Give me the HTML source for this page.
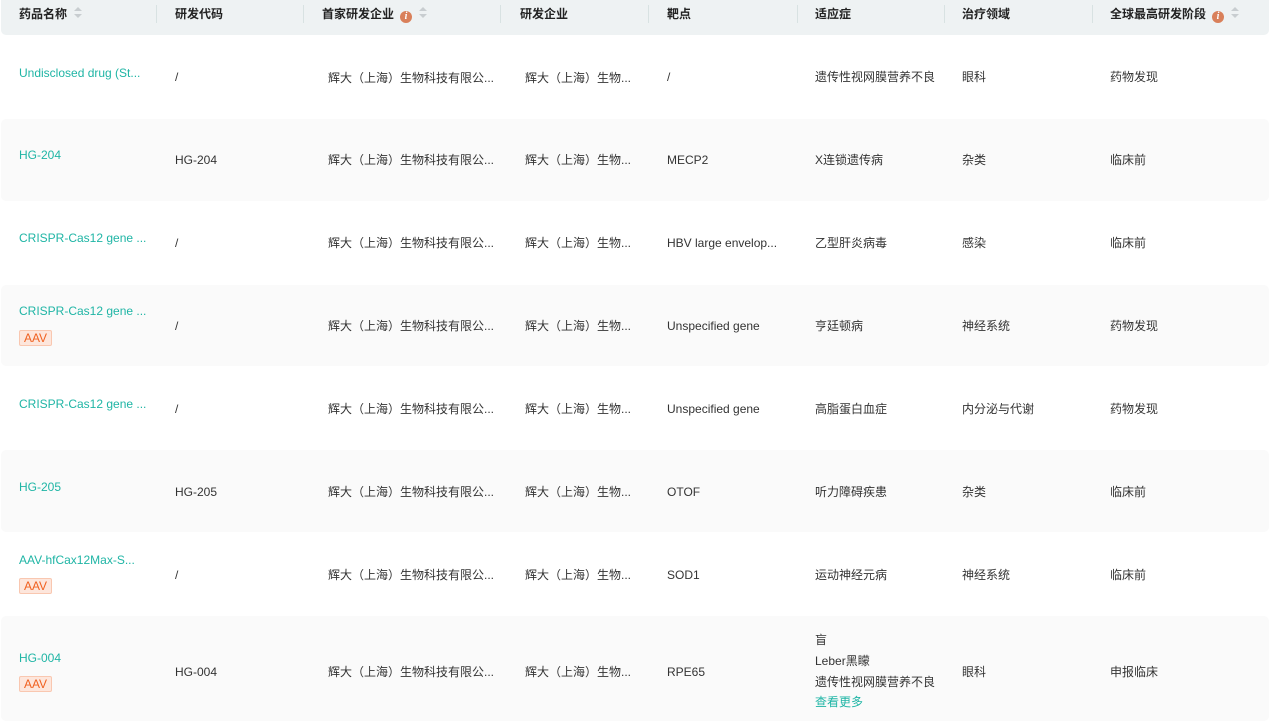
<!DOCTYPE html>
<html><head><meta charset="utf-8"><style>
*{margin:0;padding:0;box-sizing:border-box}
body{width:1269px;height:721px;overflow:hidden;background:#fff;font-family:"Liberation Sans","Noto Sans CJK SC",sans-serif;font-size:12px;color:#333;position:relative}
.hd{position:absolute;left:1px;top:0;width:1268px;height:35px;background:#eef2f3;border-radius:0 0 5px 5px}
.h{position:absolute;top:0;height:35px;line-height:29px;font-weight:bold;color:#222;font-size:12px}
.sep{position:absolute;top:5px;width:1px;height:18px;background:#d8e2e2}
.info{display:inline-block;width:12px;height:12px;border-radius:50%;background:#d9805a;color:#fff;font-size:10px;line-height:12px;text-align:center;font-style:italic;font-weight:bold;font-family:"Liberation Serif",serif;vertical-align:-1px;margin-left:6px}
.sort{display:inline-block;width:8px;height:12px;position:relative;vertical-align:-1px;margin-left:7px}
.sort:before{content:"";position:absolute;left:0;top:0;border:4px solid transparent;border-bottom:4px solid #c8cdd0;border-top:0}
.sort:after{content:"";position:absolute;left:0;top:7px;border:4px solid transparent;border-top:4px solid #c8cdd0;border-bottom:0}
.row{position:absolute;left:1px;width:1268px;border-radius:5px}
.g{background:#fafafa}
.c{position:absolute;white-space:nowrap}
.lk{color:#1fb5a5}
.tag{position:absolute;left:19px;width:33px;height:16px;background:#fde6dc;border:1px solid #f9c7b0;color:#f0601f;font-size:12px;line-height:14px;text-align:center;border-radius:2px}
</style></head><body>
<div class="hd"></div>
<div class="h" style="left:19px">药品名称<span class="sort"></span></div>
<div class="sep" style="left:156px"></div>
<div class="h" style="left:175px">研发代码</div>
<div class="sep" style="left:303px"></div>
<div class="h" style="left:322px">首家研发企业<span class="info">i</span><span class="sort"></span></div>
<div class="sep" style="left:500px"></div>
<div class="h" style="left:520px">研发企业</div>
<div class="sep" style="left:648px"></div>
<div class="h" style="left:667px">靶点</div>
<div class="sep" style="left:797px"></div>
<div class="h" style="left:815px">适应症</div>
<div class="sep" style="left:944px"></div>
<div class="h" style="left:962px">治疗领域</div>
<div class="sep" style="left:1092px"></div>
<div class="h" style="left:1110px">全球最高研发阶段<span class="info">i</span><span class="sort"></span></div>

<div class="row g" style="top:119px;height:82px"></div>
<div class="row g" style="top:285px;height:81px"></div>
<div class="row g" style="top:450px;height:82px"></div>
<div class="row g" style="top:616px;height:105px"></div>

<div class="c lk" style="left:19px;top:66px">Undisclosed drug (St...</div>
<div class="c" style="left:175px;top:70px">/</div>
<div class="c" style="left:328px;top:69px">辉大（上海）生物科技有限公...</div>
<div class="c" style="left:525px;top:69px">辉大（上海）生物...</div>
<div class="c" style="left:667px;top:70px">/</div>
<div class="c" style="left:815px;top:68px">遗传性视网膜营养不良</div>
<div class="c" style="left:962px;top:68px">眼科</div>
<div class="c" style="left:1110px;top:68px">药物发现</div>

<div class="c lk" style="left:19px;top:148px">HG-204</div>
<div class="c" style="left:175px;top:153px">HG-204</div>
<div class="c" style="left:328px;top:151px">辉大（上海）生物科技有限公...</div>
<div class="c" style="left:525px;top:151px">辉大（上海）生物...</div>
<div class="c" style="left:667px;top:153px">MECP2</div>
<div class="c" style="left:815px;top:151px">X连锁遗传病</div>
<div class="c" style="left:962px;top:151px">杂类</div>
<div class="c" style="left:1110px;top:151px">临床前</div>

<div class="c lk" style="left:19px;top:231px">CRISPR-Cas12 gene ...</div>
<div class="c" style="left:175px;top:236px">/</div>
<div class="c" style="left:328px;top:234px">辉大（上海）生物科技有限公...</div>
<div class="c" style="left:525px;top:234px">辉大（上海）生物...</div>
<div class="c" style="left:667px;top:236px">HBV large envelop...</div>
<div class="c" style="left:815px;top:234px">乙型肝炎病毒</div>
<div class="c" style="left:962px;top:234px">感染</div>
<div class="c" style="left:1110px;top:234px">临床前</div>

<div class="c lk" style="left:19px;top:304px">CRISPR-Cas12 gene ...</div>
<div class="tag" style="top:330px">AAV</div>
<div class="c" style="left:175px;top:319px">/</div>
<div class="c" style="left:328px;top:317px">辉大（上海）生物科技有限公...</div>
<div class="c" style="left:525px;top:317px">辉大（上海）生物...</div>
<div class="c" style="left:667px;top:319px">Unspecified gene</div>
<div class="c" style="left:815px;top:317px">亨廷顿病</div>
<div class="c" style="left:962px;top:317px">神经系统</div>
<div class="c" style="left:1110px;top:317px">药物发现</div>

<div class="c lk" style="left:19px;top:397px">CRISPR-Cas12 gene ...</div>
<div class="c" style="left:175px;top:402px">/</div>
<div class="c" style="left:328px;top:400px">辉大（上海）生物科技有限公...</div>
<div class="c" style="left:525px;top:400px">辉大（上海）生物...</div>
<div class="c" style="left:667px;top:402px">Unspecified gene</div>
<div class="c" style="left:815px;top:400px">高脂蛋白血症</div>
<div class="c" style="left:962px;top:400px">内分泌与代谢</div>
<div class="c" style="left:1110px;top:400px">药物发现</div>

<div class="c lk" style="left:19px;top:480px">HG-205</div>
<div class="c" style="left:175px;top:485px">HG-205</div>
<div class="c" style="left:328px;top:483px">辉大（上海）生物科技有限公...</div>
<div class="c" style="left:525px;top:483px">辉大（上海）生物...</div>
<div class="c" style="left:667px;top:485px">OTOF</div>
<div class="c" style="left:815px;top:483px">听力障碍疾患</div>
<div class="c" style="left:962px;top:483px">杂类</div>
<div class="c" style="left:1110px;top:483px">临床前</div>

<div class="c lk" style="left:19px;top:553px">AAV-hfCax12Max-S...</div>
<div class="tag" style="top:578px">AAV</div>
<div class="c" style="left:175px;top:568px">/</div>
<div class="c" style="left:328px;top:566px">辉大（上海）生物科技有限公...</div>
<div class="c" style="left:525px;top:566px">辉大（上海）生物...</div>
<div class="c" style="left:667px;top:568px">SOD1</div>
<div class="c" style="left:815px;top:566px">运动神经元病</div>
<div class="c" style="left:962px;top:566px">神经系统</div>
<div class="c" style="left:1110px;top:566px">临床前</div>

<div class="c lk" style="left:19px;top:651px">HG-004</div>
<div class="tag" style="top:676px">AAV</div>
<div class="c" style="left:175px;top:665px">HG-004</div>
<div class="c" style="left:328px;top:663px">辉大（上海）生物科技有限公...</div>
<div class="c" style="left:525px;top:663px">辉大（上海）生物...</div>
<div class="c" style="left:667px;top:665px">RPE65</div>
<div class="c" style="left:815px;top:631px">盲</div>
<div class="c" style="left:815px;top:652px">Leber黑矇</div>
<div class="c" style="left:815px;top:673px">遗传性视网膜营养不良</div>
<div class="c lk" style="left:815px;top:693px">查看更多</div>
<div class="c" style="left:962px;top:663px">眼科</div>
<div class="c" style="left:1110px;top:663px">申报临床</div>
</body></html>
